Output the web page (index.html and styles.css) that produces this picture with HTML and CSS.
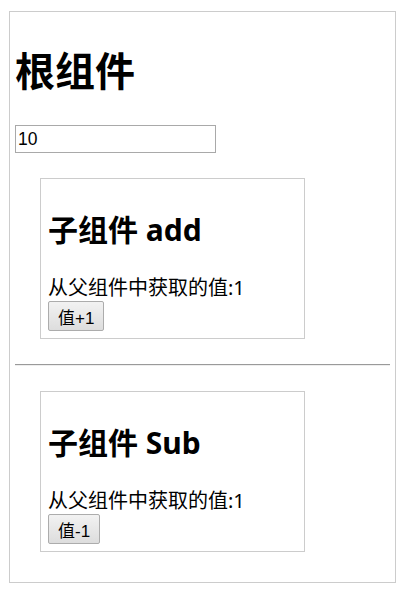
FILE: index.html
```html
<!DOCTYPE html>
<html lang="zh-CN">
<head>
<meta charset="utf-8">
<title>根组件</title>
<link rel="stylesheet" href="styles.css">
</head>
<body>
<div class="root">
  <h1 class="root-title">根组件</h1>
  <input class="root-input" type="text" value="10">
  <div class="child">
    <h2 class="child-title">子组件 add</h2>
    <div class="child-text">从父组件中获取的值:1</div>
    <button class="child-btn" type="button">值+1</button>
  </div>
  <hr class="divider">
  <div class="child">
    <h2 class="child-title">子组件 Sub</h2>
    <div class="child-text">从父组件中获取的值:1</div>
    <button class="child-btn" type="button">值-1</button>
  </div>
</div>
</body>
</html>
```

FILE: styles.css
```css
html, body {
  margin: 0;
  padding: 0;
  background: #fff;
}

body {
  font-family: "Noto Sans", "Noto Sans CJK SC", sans-serif;
  font-size: 20px;
  color: #000;
}

.root {
  box-sizing: border-box;
  width: 387px;
  margin: 11px 0 0 9px;
  padding: 5px;
  border: 1px solid #cccccc;
}

.root-title {
  margin: 28px 0 28px;
  font-size: 40px;
  line-height: 52px;
  font-weight: bold;
}

.root-input {
  display: block;
  box-sizing: border-box;
  width: 201px;
  height: 28px;
  margin: 0;
  padding: 0 2px;
  border: 1px solid #a9a9a9;
  font-family: "Liberation Sans", "Noto Sans CJK SC", sans-serif;
  font-size: 17.5px;
  color: #000;
  background: #fff;
  outline: none;
}

.child {
  box-sizing: border-box;
  width: 265px;
  margin: 25px 0 25px 25px;
  padding: 7px;
  border: 1px solid #cccccc;
}

.child-title {
  margin: 25px 0 26px;
  font-size: 30px;
  line-height: 38px;
  font-weight: bold;
}

.child-text {
  font-size: 20px;
  line-height: 26px;
}

.child-btn {
  display: block;
  box-sizing: border-box;
  height: 30px;
  margin: 0;
  padding: 0 9px;
  border: 1px solid #acacac;
  border-radius: 2px;
  background: linear-gradient(#f2f2f2, #dddddd);
  font-family: "Liberation Sans", "Noto Sans CJK SC", sans-serif;
  font-size: 17px;
  color: #000;
}

.divider {
  margin: 0;
  height: 0;
  border-style: solid;
  border-width: 1px 0;
  border-top-color: #9a9a9a;
  border-bottom-color: #eeeeee;
}
```
